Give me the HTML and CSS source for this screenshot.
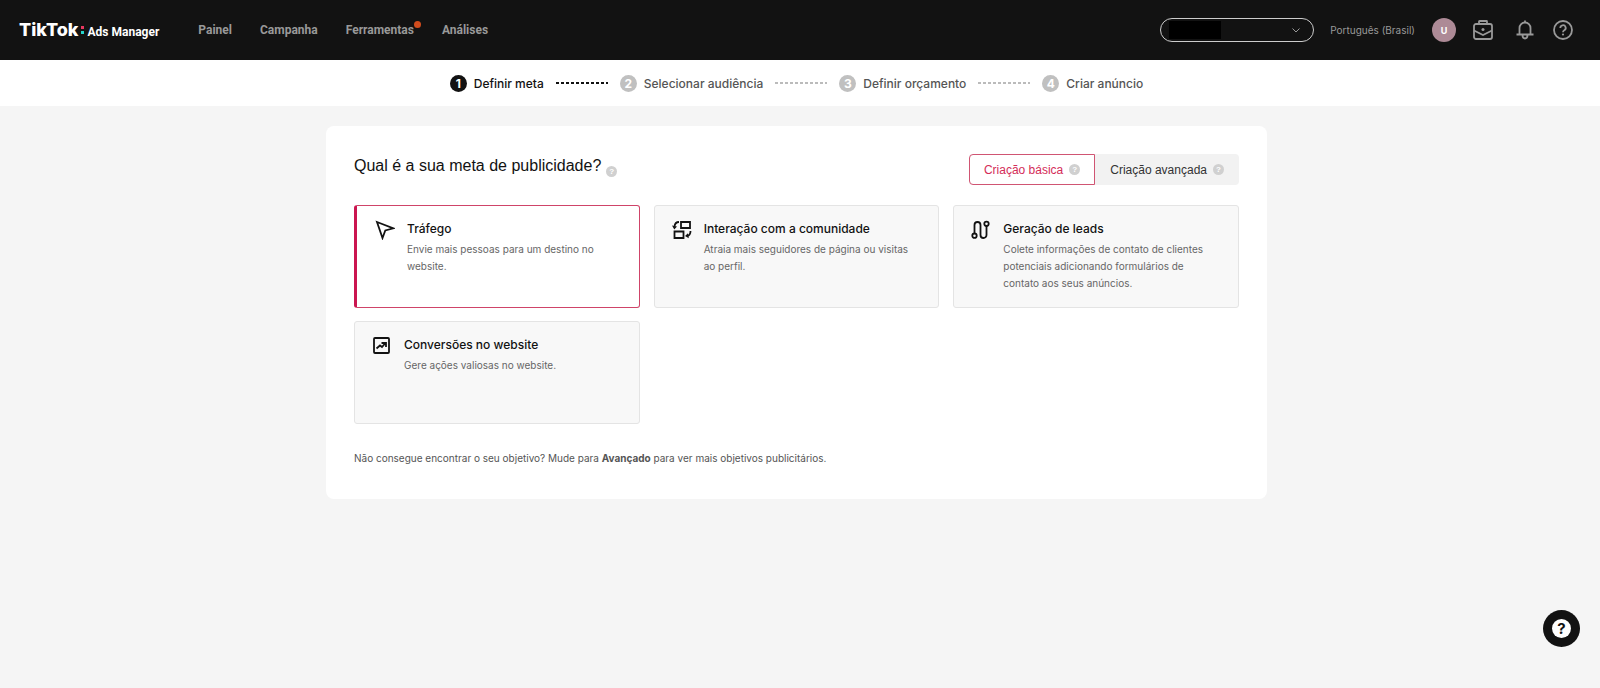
FILE: index.html
```html
<!DOCTYPE html>
<html lang="pt-BR">
<head>
    <meta charset="utf-8">
    <title>TikTok Ads Manager</title>
    <meta name="viewport" content="width=device-width, initial-scale=1">
    <link rel="stylesheet" href="styles.css">
</head>
<body>
    <header class="topbar">
        <a class="logo" href="#">
            <span class="logo-name">TikTok</span>
            <span class="logo-dots"></span>
            <span class="logo-product">Ads Manager</span>
        </a>
        <nav class="main-nav">
            <a href="#">Painel</a>
            <a href="#">Campanha</a>
            <a class="has-news" href="#">Ferramentas</a>
            <a href="#">Análises</a>
        </nav>
        <div class="tools">
            <div class="account">
                <select aria-label="Conta de anúncios">
                    <option></option>
                </select>
                <span class="account-name"></span>
                <svg class="chevron" width="8" height="5" viewBox="0 0 8 5"><path d="M0.5 0.5 4 4 7.5 0.5"/></svg>
            </div>
            <a class="language" href="#">Português (Brasil)</a>
            <button class="avatar" type="button">U</button>
            <button class="tool tool-case" type="button" aria-label="Business Center">
                <svg width="20" height="20" viewBox="0 0 20 20">
                    <rect x="1" y="4" width="18" height="15" rx="2"/>
                    <path d="M6 4V1.500Q6 1 6.500 1h7Q14 1 14 1.500V4M1 10.500 10 15l9-4.500"/>
                    <circle class="solid" cx="10" cy="9.500" r="1.500"/>
                </svg>
            </button>
            <button class="tool tool-bell" type="button" aria-label="Notificações">
                <svg width="18" height="20" viewBox="0 0 18 20">
                    <path d="M3.500 14V8a5.500 5.500 0 0 1 11 0v6M0.500 14.500h17M6.500 15a2.500 3.500 0 0 0 5 0M9 0.500v2"/>
                </svg>
            </button>
            <button class="tool" type="button" aria-label="Ajuda">
                <svg width="20" height="20" viewBox="0 0 20 20">
                    <circle cx="10" cy="10" r="9"/>
                    <path d="M7.300 8a2.700 2.700 0 1 1 4 2.300Q10 11 10 12.300"/>
                    <circle class="solid" cx="10" cy="14.500" r="1.100"/>
                </svg>
            </button>
        </div>
    </header>

    <ol class="steps">
        <li class="step current"><span class="step-number">1</span>Definir meta</li>
        <li class="step"><span class="step-number">2</span>Selecionar audiência</li>
        <li class="step"><span class="step-number">3</span>Definir orçamento</li>
        <li class="step"><span class="step-number">4</span>Criar anúncio</li>
    </ol>

    <main class="content">
        <section class="panel">
            <div class="panel-head">
                <h1>Qual é a sua meta de publicidade?<span class="hint">?</span></h1>
                <div class="modes">
                    <button class="mode selected" type="button">Criação básica<span class="hint">?</span></button>
                    <button class="mode" type="button">Criação avançada<span class="hint">?</span></button>
                </div>
            </div>

            <div class="goals">
                <button class="goal selected" type="button">
                    <svg width="20" height="20" viewBox="0 0 20 20">
                        <path d="M2 2 18.500 8.300 10.300 10.500 7.500 18z"/>
                    </svg>
                    <span class="goal-text">
                        <strong>Tráfego</strong>
                        <span>Envie mais pessoas para um destino no website.</span>
                    </span>
                </button>
                <button class="goal" type="button">
                    <svg width="20" height="20" viewBox="0 0 20 20">
                        <path d="M9 2h9v6H9zM2.500 11.500h9V18h-9z"/>
                        <path d="M7 2Q3 2 2.500 6.500M18.500 11Q18.500 15.500 15 16"/>
                        <path class="solid" d="M0 5.500 5 6.500 2.300 9.500zM13 16l3-2.800.8 5z"/>
                    </svg>
                    <span class="goal-text">
                        <strong>Interação com a comunidade</strong>
                        <span>Atraia mais seguidores de página ou visitas ao perfil.</span>
                    </span>
                </button>
                <button class="goal" type="button">
                    <svg width="20" height="20" viewBox="0 0 20 20">
                        <path d="M3.500 13.500V5a3 3 0 0 1 6 0v10a3 3 0 0 0 6 0V6"/>
                        <circle cx="3.500" cy="15.700" r="2.200"/>
                        <circle cx="15.500" cy="3.800" r="2.200"/>
                    </svg>
                    <span class="goal-text">
                        <strong>Geração de leads</strong>
                        <span>Colete informações de contato de clientes potenciais adicionando formulários de contato aos seus anúncios.</span>
                    </span>
                </button>
                <button class="goal" type="button">
                    <svg width="20" height="20" viewBox="0 0 20 20">
                        <rect x="2" y="2" width="15" height="15" rx="1"/>
                        <path d="M4.500 12.500 8 9.500l2 1.500 3.500-4M9.500 7H14v4"/>
                    </svg>
                    <span class="goal-text">
                        <strong>Conversões no website</strong>
                        <span>Gere ações valiosas no website.</span>
                    </span>
                </button>
            </div>

            <p class="switch-note">Não consegue encontrar o seu objetivo? Mude para <a href="#">Avançado</a> para ver mais objetivos publicitários.</p>
        </section>
    </main>

    <button class="help-button" type="button" aria-label="Ajuda"><span>?</span></button>
</body>
</html>
```
FILE: styles.css
```css
* {
    box-sizing: border-box;
}
body {
    margin: 0;
    min-height: 100vh;
    background: #f5f5f5;
    color: #121212;
    font-family: Inter, "Liberation Sans", Arial, sans-serif;
    font-size: 10px;
}
a {
    color: inherit;
    text-decoration: none;
}
button, select {
    font-family: inherit;
    cursor: pointer;
}
svg {
    flex: none;
    fill: none;
    stroke: currentColor;
    stroke-width: 1.8;
}
svg .solid {
    fill: currentColor;
    stroke: none;
}

/* top bar */
.topbar {
    display: flex;
    align-items: center;
    height: 60px;
    padding: 0 27px 0 19px;
    background: #121212;
    color: #999;
}
.logo {
    display: flex;
    align-items: baseline;
    color: #fff;
}
.logo-name {
    font-size: 18px;
    font-weight: 800;
    line-height: 22px;
}
.logo-dots {
    align-self: center;
    width: 3px;
    height: 8px;
    margin: 0 4px 0 2px;
    border-top: 3px solid #e8375f;
    border-bottom: 3px solid #25d5cc;
}
.logo-product {
    font-family: Roboto, sans-serif;
    font-size: 12px;
    font-weight: bold;
}
.main-nav {
    display: flex;
    gap: 28px;
    margin-left: 39px;
    font-family: Roboto, sans-serif;
    font-size: 12px;
    font-weight: bold;
}
.has-news {
    position: relative;
}
.has-news::after {
    content: "";
    position: absolute;
    top: -2px;
    right: -7px;
    width: 7px;
    height: 7px;
    border-radius: 50%;
    background: #d14c1d;
}
.tools {
    display: flex;
    align-items: center;
    margin-left: auto;
}
.account {
    position: relative;
    width: 154px;
    height: 24px;
}
.account select {
    width: 100%;
    height: 100%;
    border: 1px solid #ccc;
    border-radius: 12px;
    background: transparent;
    color: #fff;
    appearance: none;
}
.account-name {
    position: absolute;
    top: 3px;
    left: 9px;
    width: 52px;
    height: 18px;
    background: #000;
    pointer-events: none;
}
.chevron {
    position: absolute;
    top: 10px;
    right: 14px;
    stroke-width: 1;
    pointer-events: none;
}
.language {
    margin: 0 17px 0 16px;
}
.avatar {
    width: 24px;
    height: 24px;
    padding: 0;
    border: 0;
    border-radius: 50%;
    background: #ad8a96;
    color: #fff;
    font-size: 9px;
    font-weight: bold;
}
.tool {
    display: flex;
    padding: 0;
    border: 0;
    background: none;
    color: #999;
}
.tool-case {
    margin: 0 23px 0 17px;
}
.tool-bell {
    margin-right: 19px;
}

/* step bar */
.steps {
    display: flex;
    justify-content: center;
    align-items: center;
    height: 46px;
    margin: 0;
    padding: 0 7px 0 0;
    background: #fff;
    list-style: none;
}
.step {
    display: flex;
    align-items: center;
    color: #555;
    font-size: 12px;
    font-weight: 500;
}
.step:not(:last-child)::after {
    content: "";
    width: 52px;
    height: 2px;
    margin: 0 12px;
    background: repeating-linear-gradient(90deg, #bbb 0 3px, transparent 3px 5px);
}
.step-number {
    width: 17px;
    margin-right: 7px;
    border-radius: 50%;
    background: #c0c0c0;
    color: #fff;
    font-weight: bold;
    line-height: 17px;
    text-align: center;
}
.current {
    color: #121212;
}
.current .step-number {
    background: #121212;
}
.step.current::after {
    background: repeating-linear-gradient(90deg, #121212 0 3px, transparent 3px 5px);
}

/* goal panel */
.content {
    padding: 20px 7px 20px 0;
}
.panel {
    max-width: 941px;
    margin: 0 auto;
    padding: 28px;
    border-radius: 8px;
    background: #fff;
}
.panel-head {
    display: flex;
    justify-content: space-between;
    align-items: flex-start;
    margin-bottom: 20px;
}
h1 {
    display: flex;
    align-items: flex-end;
    gap: 5px;
    margin: 0;
    font-family: "Liberation Sans", Arial, sans-serif;
    font-size: 16px;
    font-weight: normal;
    line-height: 23px;
}
.hint {
    width: 11px;
    border-radius: 50%;
    background: #d0d0d0;
    color: #fff;
    font-size: 8px;
    font-weight: bold;
    line-height: 11px;
    text-align: center;
}
.modes {
    display: flex;
    border-radius: 4px;
    background: #f2f2f2;
}
.mode {
    display: flex;
    align-items: center;
    gap: 6px;
    height: 31px;
    padding: 0 14px;
    border: 1px solid transparent;
    border-radius: 4px 0 0 4px;
    background: none;
    color: #333;
    font-family: "Liberation Sans", Arial, sans-serif;
    font-size: 12px;
}
.mode.selected {
    border-color: #d05573;
    background: #fff;
    color: #d42d58;
}
.goals {
    display: grid;
    grid-template-columns: repeat(3, 1fr);
    gap: 13px 14px;
}
.goal {
    display: flex;
    align-items: flex-start;
    gap: 12px;
    min-height: 103px;
    padding: 14px 17px;
    border: 1px solid #e4e4e4;
    border-radius: 3px;
    background: #f8f8f8;
    color: #121212;
    text-align: left;
}
.goal.selected {
    padding-left: 18px;
    border-color: #cf4469;
    border-left: 3px solid #cb1650;
    background: #fff;
}
.goal-text {
    color: #666;
    font-size: 10px;
    line-height: 17px;
}
.goal-text strong {
    display: block;
    margin-bottom: 4px;
    color: #121212;
    font-size: 12px;
    font-weight: 500;
}
.goal-text span {
    display: block;
}
.switch-note {
    margin: 26px 0 4px;
    color: #555;
    line-height: 17px;
}
.switch-note a {
    font-weight: bold;
}

.help-button {
    position: fixed;
    right: 20px;
    bottom: 41px;
    display: flex;
    align-items: center;
    justify-content: center;
    width: 37px;
    height: 37px;
    padding: 0;
    border: 0;
    border-radius: 50%;
    background: #121212;
}
.help-button span {
    width: 19px;
    border-radius: 50%;
    background: #fff;
    color: #121212;
    font-size: 15px;
    font-weight: bold;
    line-height: 19px;
}
```
